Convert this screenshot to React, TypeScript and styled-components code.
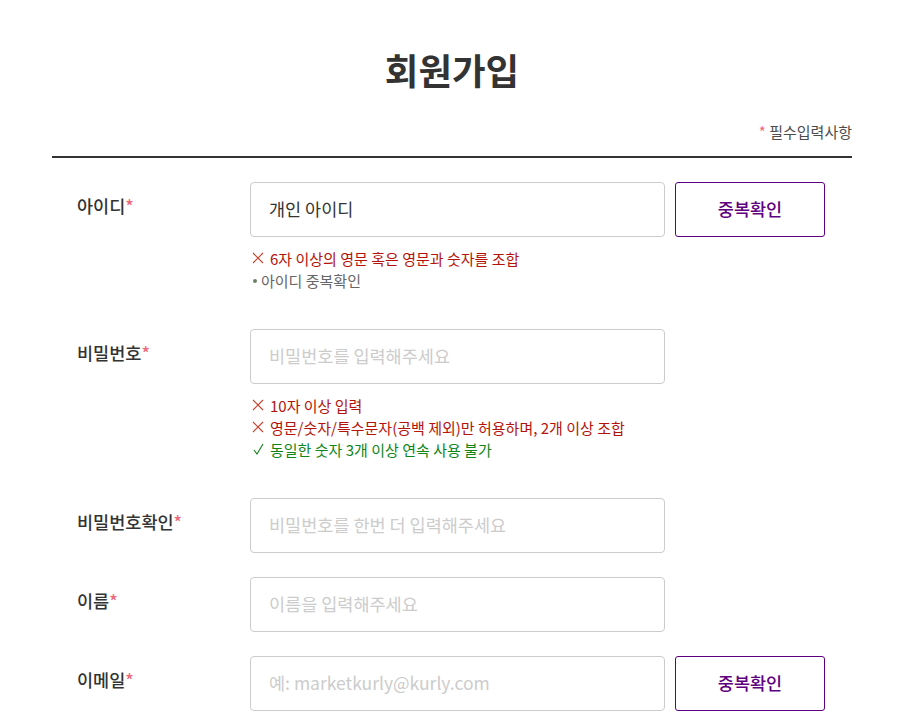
import React, { useState } from 'react';
import styled, { createGlobalStyle } from 'styled-components';

const GlobalStyle = createGlobalStyle`
	* {
		box-sizing: border-box;
	}
	body {
		margin: 0;
		padding-right: 15px;
		background: #fff;
		color: #333;
		font-family: 'Noto Sans CJK KR', 'Noto Sans', sans-serif;
	}
`;

type RuleState = 'fail' | 'pass' | 'idle';

const CrossMark: React.FC = () => (
	<svg width="12" height="12" viewBox="0 0 12 12">
		<path d="M1 1 L11 11 M11 1 L1 11" stroke="#c8402a" strokeWidth="1.1" fill="none" />
	</svg>
);

const CheckMark: React.FC = () => (
	<svg width="11" height="12" viewBox="0 0 11 12">
		<path d="M1 7 L4 11 L10 1" stroke="#0f851a" strokeWidth="1.1" fill="none" />
	</svg>
);

const Rule: React.FC<{ state: RuleState; children: React.ReactNode }> = ({ state, children }) => (
	<RuleItem $state={state}>
		{state === 'idle' ? (
			<Dot />
		) : (
			<Marker>{state === 'fail' ? <CrossMark /> : <CheckMark />}</Marker>
		)}
		{children}
	</RuleItem>
);

const App: React.FC = () => {
	const [userId, setUserId] = useState('개인 아이디');

	return (
		<Container>
			<GlobalStyle />
			<Title>회원가입</Title>
			<RequiredNote>
				<Star>*</Star> 필수입력사항
			</RequiredNote>
			<Form>
				<Row>
					<Label>
						아이디<Star>*</Star>
					</Label>
					<Field>
						<InputLine>
							<Input value={userId} onChange={(e) => setUserId(e.target.value)} />
							<CheckButton type="button">중복확인</CheckButton>
						</InputLine>
						<Guide>
							<Rule state="fail">6자 이상의 영문 혹은 영문과 숫자를 조합</Rule>
							<Rule state="idle">아이디 중복확인</Rule>
						</Guide>
					</Field>
				</Row>
				<Row>
					<Label>
						비밀번호<Star>*</Star>
					</Label>
					<Field>
						<Input type="password" placeholder="비밀번호를 입력해주세요" />
						<Guide>
							<Rule state="fail">10자 이상 입력</Rule>
							<Rule state="fail">영문/숫자/특수문자(공백 제외)만 허용하며, 2개 이상 조합</Rule>
							<Rule state="pass">동일한 숫자 3개 이상 연속 사용 불가</Rule>
						</Guide>
					</Field>
				</Row>
				<Row>
					<Label>
						비밀번호확인<Star>*</Star>
					</Label>
					<Field>
						<Input type="password" placeholder="비밀번호를 한번 더 입력해주세요" />
					</Field>
				</Row>
				<Row>
					<Label>
						이름<Star>*</Star>
					</Label>
					<Field>
						<Input placeholder="이름을 입력해주세요" />
					</Field>
				</Row>
				<Row>
					<Label>
						이메일<Star>*</Star>
					</Label>
					<Field>
						<InputLine>
							<Input placeholder="예: marketkurly@kurly.com" />
							<CheckButton type="button">중복확인</CheckButton>
						</InputLine>
					</Field>
				</Row>
			</Form>
		</Container>
	);
};

const Container = styled.div`
	width: 800px;
	margin: 0 auto;
	padding-top: 46px;
`;

const Title = styled.h1`
	margin: 0;
	font-size: 36.5px;
	line-height: 48px;
	font-weight: 700;
	text-align: center;
	color: #333;
`;

const RequiredNote = styled.p`
	margin: 0;
	padding: 28px 0 14px;
	border-bottom: 2px solid #333;
	font-size: 15px;
	line-height: 20px;
	text-align: right;
	color: #4c4c4c;
`;

const Star = styled.span`
	color: #ee6a7b;
`;

const Form = styled.div`
	padding-top: 12px;
`;

const Row = styled.div`
	display: flex;
	padding: 12px 0;
`;

const Label = styled.div`
	width: 198px;
	padding: 12px 0 0 25px;
	font-size: 17.5px;
	line-height: 24px;
	font-weight: 500;
	color: #333;
`;

const Field = styled.div`
	display: flex;
	flex-direction: column;
`;

const InputLine = styled.div`
	display: flex;
	gap: 10px;
`;

const Input = styled.input`
	width: 415px;
	height: 55px;
	padding: 0 18px 2px;
	border: 1px solid #ccc;
	border-radius: 4px;
	font-family: inherit;
	font-size: 17.5px;
	color: #333;
	outline: none;

	&::placeholder {
		color: #ccc;
	}
`;

const CheckButton = styled.button`
	width: 150px;
	height: 55px;
	padding: 0 0 2px;
	border: 1px solid #5f0080;
	border-radius: 3px;
	background: #fff;
	font-family: inherit;
	font-size: 17.5px;
	font-weight: 500;
	color: #5f0080;
	cursor: pointer;
`;

const Guide = styled.ul`
	margin: 10px 0 0;
	padding: 0 0 14px;
	list-style: none;
`;

const RuleItem = styled.li<{ $state: RuleState }>`
	display: flex;
	align-items: center;
	height: 22px;
	font-size: 15px;
	color: ${({ $state }) => ($state === 'fail' ? '#b3130b' : $state === 'pass' ? '#0f851a' : '#666')};
`;

const Marker = styled.span`
	display: inline-flex;
	align-items: center;
	justify-content: center;
	width: 12px;
	margin: 0 6px 0 2px;
`;

const Dot = styled.span`
	width: 4px;
	height: 4px;
	margin: 2px 4px 0 3px;
	border-radius: 50%;
	background: #6b8063;
`;

export default App;
